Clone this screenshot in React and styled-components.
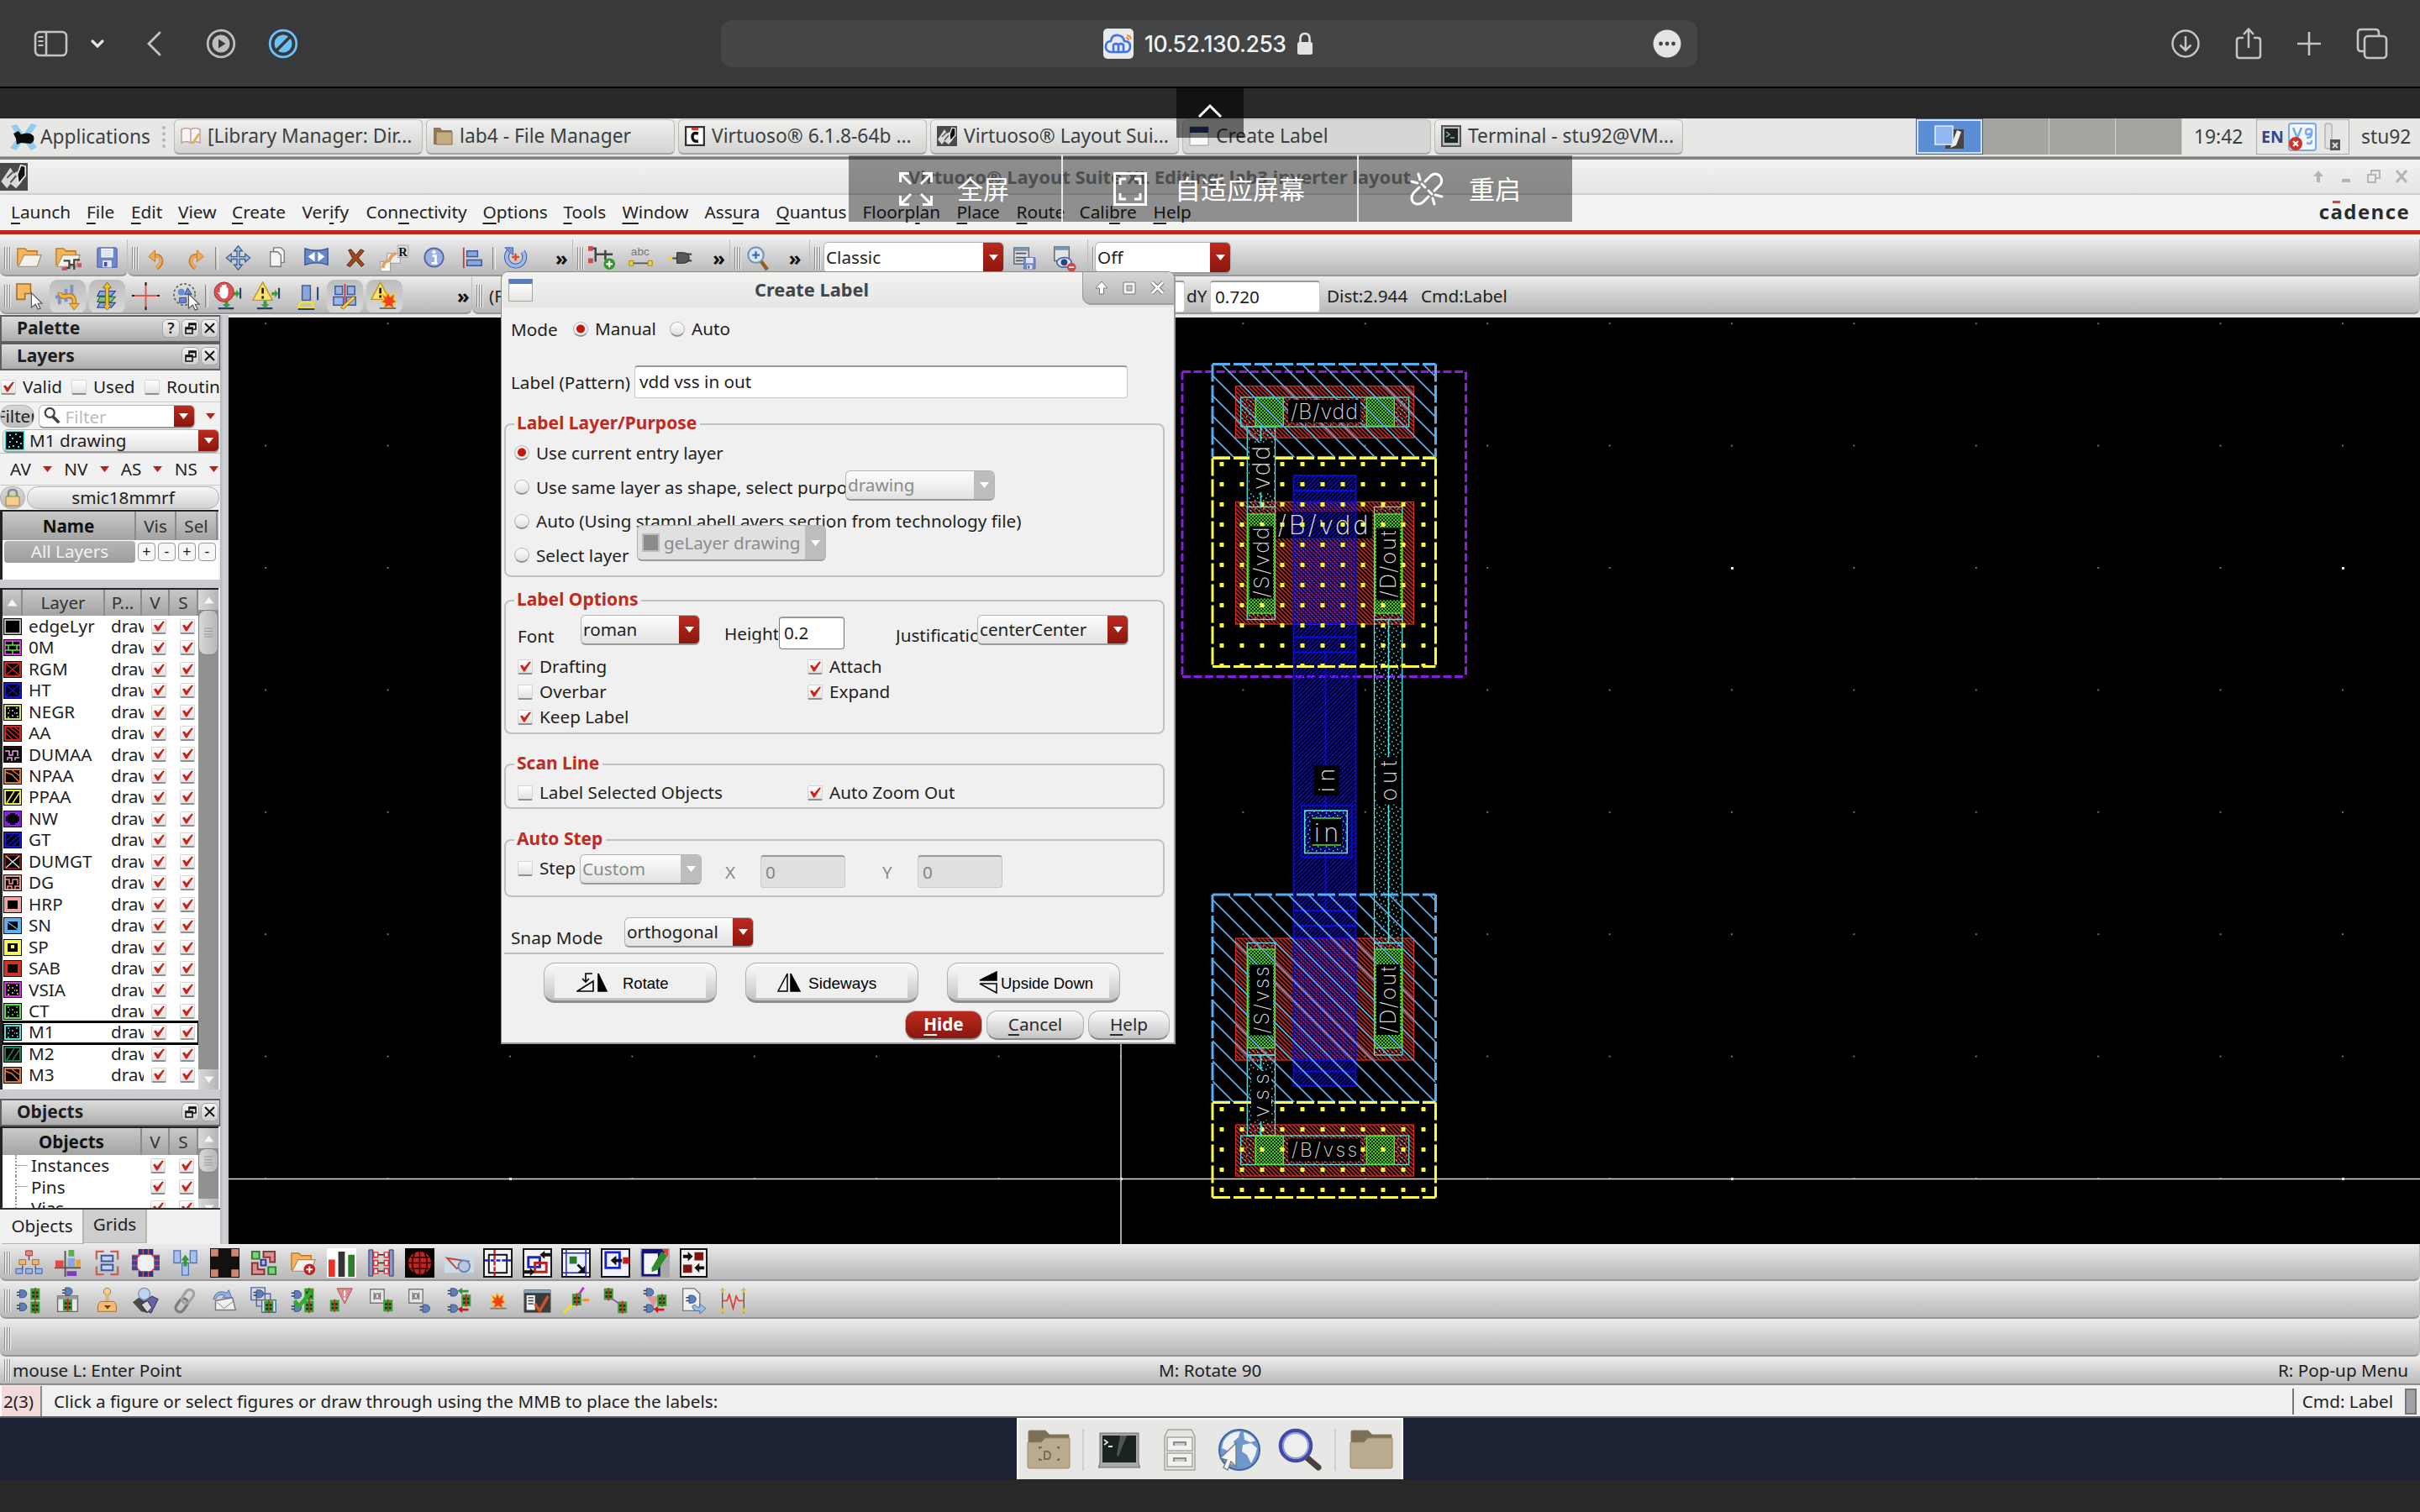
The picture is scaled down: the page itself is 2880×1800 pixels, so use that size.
import React from "react";
import styled, { createGlobalStyle, css } from "styled-components";

const RED = "#b5241a";
const redFill = "linear-gradient(#bd2a1f, #8a160d)";
const barFill = "linear-gradient(#ebebeb 0%, #d2d2d2 45%, #b9b9b9 100%)";

const Global = createGlobalStyle`
  html, body { margin: 0; padding: 0; background: #282828; }
  *, *::before, *::after { box-sizing: border-box; }
  body { font-family: "Noto Sans", "Open Sans", "Noto Sans CJK SC", sans-serif; font-size: 20.7px; line-height: 1.2; color: #1e1e1e; }
  svg { display: block; flex: none; }
`;

const Screen = styled.div`
  position: relative;
  width: 2880px;
  height: 1800px;
  overflow: hidden;
  display: flex;
  flex-direction: column;
  background: #282828;
  white-space: nowrap;
  > * { flex: none; }
`;

/* ---------- tablet browser chrome ---------- */
const BrowserBar = styled.div`
  height: 105px;
  padding: 0 38px 0 40px;
  background: #38393b;
  border-bottom: 2px solid #050505;
  display: grid;
  grid-template-columns: 818px 1162px 1fr;
  align-items: center;
`;
const BrowserSide = styled.div`
  display: flex;
  align-items: center;
  justify-content: ${(p) => (p.$end ? "flex-end" : "flex-start")};
  gap: ${(p) => p.$gap || 0}px;
  height: 100%;
`;
const BrowserSpacer = styled.div`
  width: ${(p) => p.$w}px;
`;
const AddressBar = styled.div`
  height: 56px;
  border-radius: 13px;
  background: #444547;
  display: grid;
  grid-template-columns: 455px 260px 1fr;
  align-items: center;
  color: #f2f2f2;
  font: 500 26.5px Inter, sans-serif;
`;
const AddressHost = styled.div`
  display: flex;
  align-items: center;
  gap: 13px;
  letter-spacing: -0.5px;
`;
const AddressMenu = styled.div`
  display: flex;
  justify-content: flex-end;
  padding-right: 19px;
`;
const BlackStrip = styled.div`
  height: 36px;
  background: #282828;
`;
const PullTab = styled.div`
  position: absolute;
  left: 1400px;
  top: 105px;
  width: 80px;
  height: 59px;
  padding-bottom: 5px;
  background: rgba(0, 0, 0, 0.53);
  display: flex;
  align-items: center;
  justify-content: center;
`;
const RemoteBar = styled.div`
  position: absolute;
  left: 1010px;
  top: 185px;
  width: 861px;
  height: 79px;
  background: rgba(0, 0, 0, 0.41);
  display: grid;
  grid-template-columns: 255px 352px 254px;
  color: #fff;
  font: 400 31px "Noto Sans CJK SC", "Noto Sans", sans-serif;
`;
const RemoteItem = styled.div`
  display: flex;
  align-items: center;
  gap: ${(p) => p.$gap}px;
  padding-left: 60px;
  border-right: ${(p) => (p.$last ? 0 : 2)}px solid #e8e8e8;
`;
const RemoteText = styled.span`
  margin-top: -3px;
`;

/* ---------- desktop panel ---------- */
const Panel = styled.div`
  height: 45px;
  background: #e7e7e5;
  display: flex;
  align-items: center;
  font-size: 22.8px;
  color: #3b3f42;
  padding: 0 0 2px;
`;
const AppsButton = styled.div`
  width: 193px;
  padding-left: 11px;
  display: flex;
  align-items: center;
  gap: 3px;
`;
const PanelGrip = styled.div`
  width: 14px;
  height: 26px;
  border-left: 4px dotted #b5b5b3;
`;
const Task = styled.div`
  width: 296px;
  height: 42px;
  margin-right: 4px;
  padding-left: 7px;
  border: 1px solid #b9b9b6;
  border-bottom: 2px solid #a4a4a2;
  border-radius: 6px;
  background: ${(p) => (p.$active ? "#d6d6d4" : "linear-gradient(#f0f0ef, #d3d3d1)")};
  display: flex;
  align-items: center;
  gap: 8px;
`;
const Pager = styled.div`
  display: flex;
  width: 317px;
  height: 43px;
  margin-left: 273px;
  background: #a4a4a0;
`;
const PagerCell = styled.div`
  flex: 1;
  border-right: 1px solid #d0d0cd;
  background: ${(p) => (p.$on ? "#5b8dd4" : "#a4a4a0")};
  ${(p) => p.$on && css`border: 1px solid #3d5f94; box-shadow: inset 0 0 0 2px #cfe0f7;`}
  display: flex;
  align-items: center;
  justify-content: center;
`;
const Clock = styled.div`
  width: 88px;
  padding-left: 14px;
`;
const Tray = styled.div`
  width: 111px;
  height: 42px;
  border: 1px solid #a9a9a7;
  display: flex;
  align-items: center;
  gap: 5px;
  padding-left: 5px;
  margin-right: 14px;
  font-weight: 700;
  font-size: 19.5px;
  color: #3a3f8e;
`;
const FrameEdge = styled.div`
  height: 4px;
  background: linear-gradient(#b8b8b6, #7b7b7a 40%, #8f8f8e);
`;

/* ---------- application window ---------- */
const TitleBar = styled.div`
  height: 42px;
  background: linear-gradient(#f2f2f1, #e5e5e3);
  border-bottom: 2px solid #cfcfcd;
  display: grid;
  grid-template-columns: 1081px 1fr 132px;
  align-items: center;
  font-weight: 700;
  font-size: 22px;
  color: #83868a;
`;
const WinButtons = styled.div`
  display: flex;
  gap: 11px;
`;
const MenuBar = styled.div`
  height: 42px;
  background: #f3f3f3;
  display: flex;
  align-items: center;
  padding: 0 12px 1px 13px;
  font-size: 20.8px;
  color: #222;
`;
const MenuItem = styled.span`
  width: ${(p) => p.$w}px;
  u { text-underline-offset: 5px; text-decoration-thickness: 2px; }
`;
const Brand = styled.div`
  margin-left: auto;
  padding-bottom: 2px;
  position: relative;
  font: 700 24px "Open Sans", "Noto Sans", sans-serif;
  letter-spacing: 1.4px;
  color: #2b2b2b;
  &::after {
    content: "";
    position: absolute;
    left: 16px;
    top: 4px;
    width: 9px;
    height: 3px;
    background: #d8423c;
  }
`;
const RedLine = styled.div`
  height: 5px;
  background: #bb281c;
`;
const Gutter = styled.div`
  height: 6px;
  background: #f0f0f0;
`;
const Bar = styled.div`
  display: flex;
  height: 45px;
  background: #e9e9e9;
`;
const BarGroup = styled.div`
  ${(p) => (p.$w ? `width: ${p.$w}px;` : "flex: 1;")}
  height: 44px;
  display: flex;
  align-items: center;
  background: ${barFill};
  border-bottom: 2px solid #979797;
  border-right: 1px solid #bdbdbd;
  border-radius: 0 0 7px 7px;
  padding: ${(p) => p.$pt ?? 2}px 0 0 5px;
  overflow: hidden;
`;
const Grip = styled.div`
  flex: none;
  width: 8px;
  height: 27px;
  margin-right: ${(p) => p.$mr ?? -2}px;
  background: repeating-linear-gradient(90deg, #8e8e8e 0 1px, #f2f2f2 1px 2px, transparent 2px 3px);
`;
const Slot = styled.div`
  flex: none;
  width: ${(p) => p.$w || 46.55}px;
  height: 40px;
  display: flex;
  align-items: center;
  justify-content: center;
`;
const Pressed = styled.div`
  width: 43px;
  height: 40px;
  border-radius: 9px;
  background: linear-gradient(#bcbcbc, #d9d9d9);
  display: flex;
  align-items: center;
  justify-content: center;
`;
const Separator = styled.div`
  flex: none;
  width: 4px;
  height: 27px;
  border-left: 1px solid #848484;
  border-right: 1px solid #efefef;
`;
const More = styled.div`
  flex: none;
  width: ${(p) => p.$w}px;
  text-align: center;
  font-weight: 700;
  font-size: 24px;
  color: #111;
`;

/* ---------- form controls ---------- */
const ComboBox = styled.div`
  flex: none;
  width: ${(p) => p.$w}px;
  height: ${(p) => p.$h || 36}px;
  margin-left: ${(p) => p.$ml || 0}px;
  margin-top: ${(p) => (p.$shift || 0) * 2}px;
  display: flex;
  align-items: stretch;
  overflow: hidden;
  border-radius: 6px;
  border: 1px solid #b4b4b4;
  border-bottom: 2px solid #9b9b9b;
  background: ${(p) => p.$bg || "linear-gradient(#fdfdfd, #e2e2e2)"};
  color: ${(p) => (p.$off ? "#8b8b8b" : "#1e1e1e")};
`;
const ComboText = styled.div`
  flex: 1;
  overflow: hidden;
  display: flex;
  align-items: center;
  gap: 5px;
  padding-left: ${(p) => p.$pl ?? 2}px;
`;
const ComboArrow = styled.div`
  width: 24px;
  background: ${(p) => (p.$off ? "#bdbdbd" : redFill)};
  display: flex;
  align-items: center;
  justify-content: center;
`;
const Tri = ({ c = "#fff", w = 11, h = 7 }) => (
  <svg width={w} height={h} viewBox="0 0 10 6" preserveAspectRatio="none">
    <path d="M0 0H10L5 6Z" fill={c} />
  </svg>
);
const Combo = ({ children, off, pl, ...rest }) => (
  <ComboBox $off={off} {...rest}>
    <ComboText $pl={pl}>{children}</ComboText>
    <ComboArrow $off={off}><Tri /></ComboArrow>
  </ComboBox>
);
const Input = styled.div`
  flex: none;
  width: ${(p) => p.$w}px;
  height: ${(p) => p.$h || 39}px;
  margin-left: ${(p) => p.$ml || 0}px;
  margin-top: ${(p) => (p.$shift || 0) * 2}px;
  padding-left: 5px;
  display: flex;
  align-items: center;
  border-radius: 4px;
  background: ${(p) => (p.$off ? "#e0e0e0" : "#fff")};
  color: ${(p) => (p.$off ? "#858585" : "#1e1e1e")};
  border: 1px solid ${(p) => (p.$strong ? "#777" : "#c9c9c9")};
  border-top: 2px solid #999;
`;
const CheckBoxShape = styled.span`
  flex: none;
  width: 18px;
  height: 18px;
  display: flex;
  border-radius: 2px;
  background: linear-gradient(#fff, #e2e2e2);
  border: 1px solid #d4d4d4;
  border-bottom: 2px solid #8f8f8f;
`;
const Check = ({ on }) => (
  <CheckBoxShape>
    {on && (
      <svg width="16" height="15" viewBox="0 0 16 15">
        <path d="M2 6.5L4.5 5.5L7 8.5L13 1.5L15 2L7.5 13.5H6Z" fill="#c4261d" />
      </svg>
    )}
  </CheckBoxShape>
);
const RadioShape = styled.span`
  flex: none;
  width: 18px;
  height: 18px;
  border-radius: 50%;
  border: 1px solid #b5b5b5;
  border-bottom: 2px solid #8f8f8f;
  background: ${(p) => (p.$on ? "radial-gradient(circle, #c5170c 0 4.5px, #f4f4f4 5.5px)" : "linear-gradient(#fff, #dedede)")};
`;
const Option = styled.div`
  flex: none;
  width: ${(p) => (p.$w ? `${p.$w}px` : "auto")};
  margin-top: ${(p) => (p.$shift || 0) * 2}px;
  display: flex;
  align-items: center;
  gap: 8px;
  overflow: hidden;
`;

/* ---------- dock on the left ---------- */
const Workspace = styled.div`
  height: 1106px;
  display: flex;
  background: #cfcfd3;
`;
const Dock = styled.div`
  width: 262px;
  background: #f1f1f1;
  display: flex;
  flex-direction: column;
  overflow: hidden;
  > * { flex: none; }
`;
const DockSplit = styled.div`
  width: 10px;
  background: linear-gradient(90deg, #b4b4b8, #d2d2d6 40%, #c6c6ca);
`;
const DockHeader = styled.div`
  height: 33px;
  padding: 0 2px 2px 18px;
  display: flex;
  align-items: center;
  gap: 4px;
  font-weight: 700;
  font-size: 21px;
  background: linear-gradient(#dcdcdc, #adadad);
  border: 2px solid #5f5f5f;
  border-right-width: 1px;
  > span { margin-right: auto; }
`;
const HeaderButton = styled.div`
  width: 19px;
  height: 20px;
  border-radius: 5px;
  background: linear-gradient(#f2f2f2, #cfcfcf);
  box-shadow: 0 0 0 1px #a5a5a5;
  display: flex;
  align-items: center;
  justify-content: center;
  font-size: 18px;
  font-weight: 600;
`;
const CheckRow = styled.div`
  height: 38px;
  display: grid;
  grid-template-columns: 84px 87px 1fr;
  align-items: center;
  border-bottom: 1px solid #cdcdcd;
  padding: 2px 0 0 1px;
`;
const FilterRow = styled.div`
  height: 31px;
  display: flex;
  align-items: center;
  gap: 5px;
  padding-top: 2px;
`;
const Pill = styled.div`
  width: ${(p) => p.$w}px;
  height: 27px;
  border-radius: 13px;
  border: 1px solid #b0b0b0;
  background: ${(p) => (p.$dark ? "linear-gradient(#d8d8d8, #bdbdbd)" : "linear-gradient(#f7f7f7, #d2d2d2)")};
  display: flex;
  align-items: center;
  justify-content: center;
  overflow: hidden;
`;
const FilterText = styled.span`
  margin-top: 3px;
  color: #bcbcbc;
`;
const FilterMenu = styled.div`
  width: 27px;
  padding-left: 8px;
`;
const ComboRow = styled.div`
  height: 30px;
  padding: 1px 0 0 3px;
  border-bottom: 1px solid #c4c4c4;
`;
const VisRow = styled.div`
  height: 38px;
  padding: 0 2px 0 12px;
  display: flex;
  align-items: center;
  justify-content: space-between;
  border-bottom: 1px solid #c9c9c9;
`;
const LibRow = styled.div`
  height: 29px;
  display: flex;
  align-items: center;
  gap: 2px;
`;
const NameTable = styled.div`
  height: 83px;
  margin-right: 2px;
  border-top: 2px solid #222;
  border-left: 3px solid #222;
  background: #fff;
`;
const HeadRow = styled.div`
  height: ${(p) => p.$h}px;
  display: grid;
  grid-template-columns: ${(p) => p.$cols};
  background: linear-gradient(#c9c9c9, #a3a3a3);
  color: #333;
  text-align: center;
`;
const HeadCell = styled.div`
  display: flex;
  align-items: center;
  justify-content: center;
  border-right: 2px solid #8b8b8b;
  ${(p) => p.$b && "font-weight: 700; color: #111;"}
`;
const NameRow = styled.div`
  height: 27px;
  display: flex;
  align-items: center;
  gap: 3px;
  padding-left: 2px;
`;
const AllLayers = styled.div`
  width: 156px;
  height: 26px;
  border-radius: 4px;
  background: linear-gradient(#b5b5b5, #9d9d9d);
  color: #f2f2f2;
  text-align: center;
`;
const Mini = styled.div`
  width: 21px;
  height: 22px;
  border: 1px solid #999;
  border-radius: 4px;
  background: #f5f5f5;
  display: flex;
  align-items: center;
  justify-content: center;
  font-size: 18px;
`;
const SplitH = styled.div`
  height: ${(p) => p.$h}px;
  background: #cbcbd0;
`;
const ListBox = styled.div`
  height: ${(p) => p.$h}px;
  margin-right: 2px;
  border-top: 2px solid #222;
  border-left: 3px solid #222;
  display: grid;
  grid-template-columns: 233px 24px;
  background: #fff;
  overflow: hidden;
`;
const LayerRow = styled.div`
  height: 25.46px;
  display: grid;
  grid-template-columns: 30px 98px 39px 9px 34px 1fr;
  align-items: center;
  padding-left: 1px;
  ${(p) => p.$on && css`
    outline: 3px solid #000;
    outline-offset: -1px;
  `}
`;
const LayerText = styled.div`
  overflow: hidden;
  margin-top: -1px;
`;
const TreeRow = styled.div`
  height: 25.3px;
  display: grid;
  grid-template-columns: 34px 142px 34px 1fr;
  align-items: center;
`;
const TreeLine = styled.div`
  width: 15px;
  height: 100%;
  margin-left: 15px;
  border-left: 2px dotted #999;
  background: linear-gradient(#aaa, #aaa) 0 50% / 100% 1px no-repeat;
`;
const Scroll = styled.div`
  display: flex;
  flex-direction: column;
  background: #919191;
`;
const ScrollButton = styled.div`
  height: 24px;
  background: linear-gradient(90deg, #d9d9d9, #b5b5b5);
  display: flex;
  align-items: center;
  justify-content: center;
  ${(p) => p.$end && "margin-top: auto;"}
`;
const Thumb = styled.div`
  height: ${(p) => p.$h}px;
  border-radius: 9px;
  border: 1px solid #808080;
  background: linear-gradient(90deg, #d8d8d8, #b6b6b6);
  display: flex;
  align-items: center;
  justify-content: center;
`;
const Tabs = styled.div`
  height: 43px;
  border-top: 2px solid #333;
  display: flex;
  padding-left: 2px;
`;
const Tab = styled.div`
  width: ${(p) => p.$w}px;
  height: ${(p) => (p.$on ? 41 : 40)}px;
  background: ${(p) => (p.$on ? "#f1f1f1" : "#cecece")};
  border-right: 2px solid #b5b5b5;
  border-bottom: 1px solid #b5b5b5;
  display: flex;
  align-items: center;
  justify-content: center;
  padding-bottom: ${(p) => (p.$on ? 2 : 4)}px;
`;
const CanvasFrame = styled.div`
  width: 2608px;
  padding-top: 3px;
  background: #e9e9e9;
`;

/* ---------- bottom of the window ---------- */
const MouseBar = styled.div`
  height: 33px;
  padding: 0 14px 1px 5px;
  display: grid;
  grid-template-columns: 10px 1364px 1fr auto;
  align-items: center;
  background: linear-gradient(#ececec, #b9b9b9);
  border-bottom: 2px solid #8d8d8d;
`;
const StatusBar = styled.div`
  height: 39px;
  padding-top: 1px;
  background: #f0f0f0;
  border-bottom: 2px solid #5c5c5c;
  display: flex;
  align-items: center;
`;
const StatusCount = styled.div`
  width: 50px;
  height: 36px;
  margin-right: 14px;
  padding-left: 2px;
  display: flex;
  align-items: center;
  background: #f2dada;
  border-left: 2px solid #fff;
  border-right: 2px solid #8a8a8a;
`;
const StatusCmd = styled.div`
  margin-left: auto;
  height: 31px;
  padding: 0 4px 0 10px;
  border-left: 2px solid #777;
  display: flex;
  align-items: center;
  gap: 14px;
`;
const StatusGrip = styled.div`
  width: 14px;
  height: 31px;
  border: 2px solid #777;
  background: #a2a2a8;
`;
const Desktop = styled.div`
  height: 73px;
  background: #1a2233;
  display: flex;
  padding-left: 1210px;
`;
const Launcher = styled.div`
  width: 460px;
  background: #e7e7e5;
  border: 2px solid #fafafa;
  border-bottom: 0;
  display: grid;
  grid-template-columns: 72px 10px 75px 69px 74px 70px 14px 72px;
  align-items: center;
`;
const LaunchCell = styled.div`
  display: flex;
  align-items: center;
  justify-content: center;
`;
const LaunchRule = styled.div`
  width: 2px;
  height: 50px;
  justify-self: center;
  background: #cfcfcd;
`;

/* ---------- Create Label dialog ---------- */
const Dialog = styled.div`
  position: absolute;
  left: 596px;
  top: 323px;
  width: 803px;
  height: 920px;
  padding-left: 1px;
  background: #f0f0f0;
  border: 1px solid #8a8a8a;
  border-right: 2px solid #9c9c9c;
  border-bottom: 2px solid #9c9c9c;
  border-radius: 9px 9px 0 0;
  overflow: hidden;
`;
const DialogTitle = styled.div`
  height: 42px;
  background: linear-gradient(#f2f2f1, #e6e6e4);
  display: grid;
  grid-template-columns: 46px 644px 1fr;
  align-items: center;
  text-align: center;
  font-weight: 700;
  font-size: 21.8px;
  color: #3f474c;
`;
const DialogMark = styled.div`
  width: 29px;
  height: 27px;
  margin-left: 7px;
  border: 1px solid #a6a6a6;
  border-top: 6px solid #5a7db5;
  background: linear-gradient(#fff, #e4e5df);
`;
const DialogButtons = styled.div`
  height: 39px;
  padding-left: 3px;
  align-self: start;
  border-radius: 0 0 0 10px;
  border-left: 1px solid #999;
  border-bottom: 2px solid #a0a0a0;
  background: linear-gradient(#d6d6d6, #b4b4b4);
  display: flex;
  align-items: center;
  justify-content: center;
  gap: 17px;
`;
const FormRow = styled.div`
  height: ${(p) => p.$h}px;
  padding-left: ${(p) => p.$pl || 0}px;
  padding-top: ${(p) => p.$pt || 0}px;
  display: flex;
  align-items: center;
`;
const Label = styled.div`
  flex: none;
  width: ${(p) => p.$w}px;
  margin-left: ${(p) => p.$ml || 0}px;
  margin-top: ${(p) => (p.$shift || 0) * 2}px;
  overflow: hidden;
  color: ${(p) => (p.$off ? "#8b8b8b" : "inherit")};
`;
const Group = styled.fieldset`
  width: 786px;
  height: ${(p) => p.$h}px;
  min-width: 0;
  margin: ${(p) => p.$mt || 0}px 0 0 2px;
  padding: 0 0 0 10px;
  border: 2px solid #c2c2c2;
  border-radius: 8px;
`;
const Legend = styled.legend`
  height: 26px;
  padding: 0 4px 2px 3px;
  display: flex;
  align-items: center;
  font-weight: 700;
  font-size: 21px;
  color: #c02a22;
`;
const SnapRow = styled(FormRow)`
  border-bottom: 2px solid #bdbdbd;
  margin: 0 12px 0 2px;
`;
const ToolRow = styled.div`
  height: 64px;
  padding: 3px 0 0 49px;
  display: flex;
  align-items: center;
  gap: 34px;
`;
const ToolButton = styled.div`
  width: 206px;
  height: 48px;
  border-radius: 13px;
  background: linear-gradient(#fdfdfd, #c2c2c2);
  border: 1px solid #b0b0b0;
  border-bottom: 3px solid #8f8f8f;
  padding: 4px 12px 3px;
`;
const ToolFace = styled.div`
  height: 100%;
  background: #f0f0f0;
  display: flex;
  align-items: center;
  padding-left: ${(p) => p.$pl}px;
  gap: ${(p) => p.$gap}px;
  font: ${(p) => p.$fs || 18.5}px "Liberation Sans", sans-serif;
  color: #000;
`;
const ToolText = styled.span`
  padding-top: 4px;
`;
const ActionRow = styled.div`
  height: 40px;
  padding-right: 5px;
  display: flex;
  align-items: center;
  justify-content: flex-end;
  gap: 5px;
`;
const Action = styled.div`
  width: ${(p) => p.$w}px;
  height: 35px;
  border-radius: 13px;
  border: 1px solid #b0b0b0;
  border-bottom: 2px solid #888;
  background: ${(p) => (p.$main ? redFill : "linear-gradient(#fcfcfc, #c5c5c5)")};
  color: ${(p) => (p.$main ? "#fff" : "#2a2a2a")};
  font-weight: ${(p) => (p.$main ? 700 : 400)};
  display: flex;
  align-items: center;
  justify-content: center;
  u { text-underline-offset: 4px; text-decoration-thickness: 2px; }
`;

/* ---------- icons (36 × 36 grid) ---------- */
const Icon = ({ s = 35, children }) => (
  <svg width={s} height={s} viewBox="0 0 36 36" fill="none">{children}</svg>
);
const Chip = ({ x, y }) => (
  <g>
    <path d={`M${x} ${y}h12v15h-12z`} fill="#3d9b35" />
    <path d={`M${x + 2} ${y + 4}h3v3h-3zM${x + 7} ${y + 4}h3v3h-3zM${x + 2} ${y + 9}h3v3h-3zM${x + 7} ${y + 9}h3v3h-3z`} fill="#123c10" />
    <path d={`M${x + 6} ${y - 1}v17`} stroke="#d02020" strokeWidth="1.6" />
  </g>
);
const Plug = ({ x, y }) => (
  <g>
    <path d={`M${x} ${y + 3}h4M${x} ${y + 7}h4`} stroke="#333c55" strokeWidth="1.6" />
    <path d={`M${x + 4} ${y}h4a5 5 0 0 1 0 10h-4z`} fill="#5f7fb8" stroke="#334d80" />
  </g>
);
const Arrow = ({ d, c = "#2f9a2f" }) => <path d={d} fill={c} />;
const Flash = ({ x, y }) => (
  <path transform={`translate(${x} ${y})`} d="M0 2L6 6L8 0L11 6L17 1L15 9L19 12L14 14L16 20L9 17L3 20L5 14L0 12L4 9Z" fill="#f0401c" stroke="#ffc21a" strokeWidth="1.2" />
);
const Pointer = ({ x, y }) => (
  <path transform={`translate(${x} ${y})`} d="M0 0L13 13L8 13L11 19L8 20L5 14L0 18Z" fill="#fff" stroke="#555" strokeWidth="1.2" />
);
const Disk = ({ x = 6, y = 5, s = 24 }) => (
  <g transform={`translate(${x} ${y}) scale(${s / 26})`}>
    <path d="M0 2Q0 0 2 0H24Q26 0 26 2V26H0Z" fill="#6f87cd" stroke="#40549a" />
    <path d="M5 1h16v12H5z" fill="#f4f6fb" />
    <path d="M7 4h12M7 7h12M7 10h12" stroke="#b6c2e4" />
    <path d="M7 17h12v9H7z" fill="#dfe4f2" /><path d="M9 19h4v6H9z" fill="#40549a" />
  </g>
);
const FolderOpen = () => (
  <g>
    <path d="M4 27V6h9l3 3h12v6" fill="#f2b45c" stroke="#b8741f" strokeWidth="1.3" />
    <path d="M5 28L12 14H33L28 28Z" fill="#f3f1ee" stroke="#a98b60" strokeWidth="1.2" />
  </g>
);
const NetMark = () => (
  <g>
    <path d="M3 6h7v16M10 13h12M22 8v12M22 13h9" stroke="#444" strokeWidth="2.6" />
    <path d="M1 3h6v6H1zM1 18h6v6H1z" fill="#cf4b52" />
  </g>
);
const Doc = ({ x, y }) => <path d={`M${x} ${y}h9l4 4v14h-13z`} fill="#f4f4f4" stroke="#7a7a7a" strokeWidth="1.4" />;
const BackArrow = () => (
  <g>
    <path d="M18 30C27 24 25 13 14 15" stroke="#c77a26" strokeWidth="5" />
    <path d="M18 29.500C26 23 24 14 14 15.500" stroke="#efab5c" strokeWidth="3" />
    <path d="M8 16L16 8V22Z" fill="#efab5c" stroke="#c77a26" />
  </g>
);
const Dimension = () => (
  <g>
    <path d="M33 8v13M6 33h19" stroke="#26406e" strokeWidth="2.200" />
    <path d="M14 24v4h-3l5 5 5-5h-3v-4M24 13h4v-3l4 5-4 5v-3h-4" fill="#3e9b3a" />
  </g>
);

const icons = {
  open: <FolderOpen />,
  openNet: <g><FolderOpen /><path d="M13 21h7v9h-5M20 26h6v-6h7M26 26v6" stroke="#444" strokeWidth="2.4" /><path d="M11 29h6v4h-6zM30 24h5v5h-5z" fill="#d05058" /></g>,
  save: <Disk />,
  undo: <BackArrow />,
  redo: <g transform="matrix(-1 0 0 1 36 0)"><BackArrow /></g>,
  move: <path d="M18 3l5 6h-3.500v7h7v-3.500l6 5-6 5V19h-7v7H23l-5 6-5-6h3.500v-7h-7v3.500l-6-5 6-5V16h7V9H13z" fill="#a8c3e6" stroke="#3f618f" strokeWidth="1.4" />,
  copy: <g><Doc x={14} y={5} /><Doc x={10} y={10} /></g>,
  stretch: <g><path d="M4 6q14 5 28 0v20q-14-5-28 0z" fill="#6888c8" stroke="#37538f" strokeWidth="1.4" /><path d="M16 10v12l-8-6zM20 10v12l8-6z" fill="#fff" /></g>,
  del: <path d="M9 8l3-1 6 7 6-7 4 2-7 8.500 7 8-3 3-7-8-7 8-4-2 7-8.500z" fill="#9c4a1c" stroke="#5c2408" />,
  replaceR: <g><path d="M9 12h16v12H9z" fill="#eee" stroke="#999" /><path d="M1 22h12v12H1z" fill="#f7f7f7" stroke="#999" /><path d="M4 30q0-8 7-9M12 21q1-7 8-9" stroke="#e0a35c" strokeWidth="4" /><path d="M22 2h13v15H22z" fill="#d8d8d8" stroke="#aaa" /><text x="23" y="15" fontSize="15" fontWeight="700" fontFamily="Liberation Serif" fill="#111">R</text></g>,
  info: <g><circle cx="18" cy="17" r="11.500" fill="#9cb0e0" stroke="#4d65a8" strokeWidth="1.8" /><path d="M16 15h4v9M15 24h7" stroke="#fff" strokeWidth="2.800" /><circle cx="18" cy="10.500" r="2.200" fill="#fff" /></g>,
  align: <g><path d="M7 5v25" stroke="#c03a3a" strokeWidth="1.8" /><path d="M11 9h13v7H11zM11 20h18v7H11z" fill="#8aa6dc" stroke="#3b589b" strokeWidth="1.5" /></g>,
  rotate: <g><path d="M10 9a11 11 0 1 0 17 1" stroke="#405da6" strokeWidth="6" /><path d="M10 9a11 11 0 1 0 17 1" stroke="#a3b8e8" strokeWidth="4" /><path d="M5 5h10v9z" fill="#7c97d5" stroke="#405da6" /><path d="M18 12v9M13.500 16.500h9" stroke="#e04a2c" strokeWidth="2.600" /></g>,
  netAdd: <g><NetMark /><circle cx="27" cy="25" r="7" fill="#33962f" /><path d="M27 21v8M23 25h8" stroke="#fff" strokeWidth="2.200" /></g>,
  abc: <g><text x="6" y="14" fontSize="14" fontFamily="Liberation Sans" fill="#777">abc</text><path d="M6 24h24" stroke="#555" strokeWidth="1.800" /><path d="M4 21h5v6H4zM27 21h5v6h-5z" fill="#f2d434" stroke="#a58a12" /></g>,
  plug: <g><path d="M5 18h9M24 13h8M24 21h8" stroke="#444" strokeWidth="2.200" /><path d="M14 11h7q8 0 8 6.500T21 24h-7z" fill="#585858" stroke="#222" /><circle cx="6" cy="18" r="2.600" fill="#f2d434" /></g>,
  zoom: <g><path d="M22 21l8 11" stroke="#9c5d20" strokeWidth="4.500" /><circle cx="16" cy="14" r="9.500" fill="#d5e6f7" stroke="#7d94b0" strokeWidth="2.200" /><path d="M16 9.500v9M11.500 14h9" stroke="#3e68ad" strokeWidth="2.400" /></g>,
  viewSave: <g><path d="M6 5h18v20H6z" fill="#dde0e3" stroke="#5d666e" strokeWidth="1.500" /><path d="M6 5h18v4H6z" fill="#7f95a8" /><path d="M8 12h13M8 17h13M8 21h9" stroke="#555" strokeWidth="1.800" /><Disk x={18} y={17} s={14} /></g>,
  viewHide: <g><path d="M8 4h18v17H8z" fill="#e2e4e6" stroke="#5d666e" strokeWidth="1.500" /><path d="M8 4h18v4H8z" fill="#7f95a8" /><ellipse cx="20" cy="23" rx="9" ry="6" fill="#dbe6f7" stroke="#4a6ba6" strokeWidth="1.800" /><circle cx="20" cy="23" r="4" fill="#27457c" /><circle cx="29" cy="29" r="5.500" fill="#cf4a48" /><path d="M26 29h6" stroke="#fff" strokeWidth="1.800" /></g>,
  selShape: <g><path d="M3 3h17v12h-7v7H3z" fill="#f3b765" stroke="#a96c1d" strokeWidth="1.600" /><Pointer x={21} y={14} /></g>,
  wire: <g><path d="M3 19h22M8 13v15M16 9v16M23 4v18" stroke="#7f95c4" strokeWidth="4" /><path d="M8 14q2 6 9 4t9 4v6" stroke="#a96c1d" strokeWidth="5.500" /><path d="M8 14q2 6 9 4t9 4v6" stroke="#f3b540" strokeWidth="3.500" /><path d="M20 27h12l-6 8z" fill="#f3b540" stroke="#a96c1d" /></g>,
  layers: <g><path d="M9 12h19l-5 6H6zM9 26h19l-5 6H6z" fill="#8fa6e0" stroke="#32498e" strokeWidth="1.300" /><path d="M9 19h19l-5 6H6z" fill="#7ec27a" stroke="#2c7a2c" strokeWidth="1.300" /><path d="M18 1l5 7h-3v21h3l-5 6-5-6h3V8h-3z" fill="#f3bf2c" stroke="#8d6a0d" /></g>,
  cross: <g><path d="M18 2v32M2 17.500h32" stroke="#dd5a4e" strokeWidth="2" /><path d="M18 1v4M18 31v4M1 17.500h3M32 17.500h3" stroke="#222" strokeWidth="2.200" /></g>,
  selGroup: <g><circle cx="17" cy="16" r="13" stroke="#666" strokeWidth="1.800" strokeDasharray="3 2.500" /><circle cx="13" cy="13" r="4" fill="#6b8bd0" /><path d="M11 20h8v6h-8zM21 8l5 8h-9z" fill="#6b8bd0" stroke="#32498e" /><Pointer x={22} y={15} /></g>,
  stop: <g><Dimension /><circle cx="13" cy="13" r="12" fill="#d85252" stroke="#a03030" /><path d="M8 14V8q1-2 2 0V5q2-2 3 0V4q2-1 3 1v3q2-1 2 1v7q-1 5-5 5t-5-4l-3-4z" fill="#fff" /></g>,
  warn: <g><Dimension /><path d="M13 1L25 23H1Z" fill="#fbe273" stroke="#c09a1a" strokeWidth="1.500" /><path d="M13 8v7M13 18v3" stroke="#111" strokeWidth="2.600" /></g>,
  ruler: <g><path d="M13 5h10v18H13z" fill="#8aa6dc" stroke="#3b589b" strokeWidth="1.500" /><path d="M11 26h14l2 6H9z" stroke="#f2e41c" strokeWidth="2.500" /><path d="M32 7v16M8 34h20" stroke="#26406e" strokeWidth="2" /></g>,
  edit: <g><path d="M6 6h9v10H6zM21 6h9v10h-9zM4 19h12v10H4zM20 19h11v10H20z" fill="#9db4e2" stroke="#3b589b" strokeWidth="1.500" /><path d="M18 3v29" stroke="#c03a3a" strokeWidth="1.800" /><path d="M13 32L28 18l2.500 2.500L16 34z" fill="#f6d040" stroke="#856a10" /></g>,
  warnFlash: <g><path d="M13 1L24 22H2Z" fill="#fbe273" stroke="#c09a1a" strokeWidth="1.500" /><path d="M13 8v7M13 17v3" stroke="#111" strokeWidth="2.600" /><Flash x={14} y={13} /><path d="M12 33h20" stroke="#555" strokeWidth="1.500" /></g>,
};

const padBlocks = [];
for (let k = 0; k < 3; k++) {
  padBlocks.push([9 + k * 6.500, 1, 5, 7], [9 + k * 6.500, 28, 5, 7], [1, 9 + k * 6.500, 7, 5], [28, 9 + k * 6.500, 7, 5]);
}
const rowA = [
  <g><path d="M18 9v6M10 21v5M26 21v5" stroke="#555" strokeWidth="1.500" /><path d="M14 3h8v6h-8z" fill="#e58a88" stroke="#a03a38" /><path d="M6 14h8v6H6zM22 14h8v6h-8z" fill="#f2b878" stroke="#a86a28" /><path d="M2 25h8v6H2zM14 25h8v6h-8zM26 25h8v6h-8z" fill="#9fb8ea" stroke="#3b589b" /></g>,
  <g><path d="M2 24h32M15 3v32" stroke="#555" strokeWidth="2" /><path d="M19 2h7v8h-7z" fill="#56b050" /><path d="M18 12h9v11h-9z" fill="#8aa6dc" /><path d="M3 15h10v9H3z" fill="#dd4a48" /><path d="M28 14h6v9h-6z" fill="#eea23c" /><path d="M17 28h12v6H17z" fill="#7a3fc0" /></g>,
  <g><path d="M5 14V4h9M22 4h9v10M31 22v10h-9M14 32H5V22" stroke="#c86060" strokeWidth="2.500" /><path d="M11 9h14v7H11zM11 20h14v7H11z" fill="#c5d3f2" stroke="#3b589b" strokeWidth="2" /></g>,
  <g><path d="M9 1h18v7h8v19h-8v8H9v-8H1V8h8z" fill="#e04a40" />{padBlocks.map(([x, y, w, h], k) => <rect key={k} x={x} y={y} width={w} height={h} fill={k % 4 < 2 ? "#27378f" : "#3448a8"} />)}<path d="M12 8h12l4 4v12l-4 4H12l-4-4V12z" fill="#f0f0f0" /></g>,
  <g><path d="M4 3h8v15H4zM24 3h8v15h-8zM14 18h8v15h-8z" fill="#a9c0ef" stroke="#5470b4" strokeWidth="1.300" /><Arrow d="M18 8l5 7h-3v7h-4v-7h-3z" /></g>,
  <g><path d="M0 0h36v36H0z" fill="#151010" /><path d="M1 1h9v9H1zM26 1h9v9h-9zM1 26h9v9H1zM26 26h9v9h-9z" fill="#d3836e" /></g>,
  <g><path d="M4 4h9v9H4zM24 23h9v9h-9z" fill="#7fd07a" stroke="#2c7a2c" strokeWidth="2" /><path d="M18 4h14v13h-6v-6h-8zM4 18h7v8h8v6H4z" fill="#d79090" stroke="#8c3030" strokeWidth="2" /><path d="M15 14h6v7h-6z" fill="#a9b4ef" stroke="#2b3790" strokeWidth="2" /></g>,
  <g><FolderOpen /><circle cx="26" cy="26" r="7" fill="#c02020" /><path d="M26 22v8M22 26h8" stroke="#fff" strokeWidth="2" /></g>,
  <g><path d="M0 0h36v36H0z" fill="#fff" /><path d="M2 14h8v21H2z" fill="#ea3226" /><path d="M14 4h8v31h-8z" fill="#333" /><path d="M26 8h8v27h-8z" fill="#2f7d2a" /></g>,
  <g><path d="M3 2h5v32H3zM28 2h5v32h-5z" fill="#8a97c8" stroke="#26306c" /><path d="M8 8h20M8 18h20M8 28h20" stroke="#333" strokeWidth="1.500" /><path d="M9 5h5v6H9zM22 5h5v6h-5zM9 15h5v6H9zM22 15h5v6h-5zM9 25h5v6H9zM22 25h5v6h-5z" fill="#fff" stroke="#e02a2a" strokeWidth="1.500" /></g>,
  <g><path d="M0 0h36v36H0z" fill="#070303" /><circle cx="18" cy="18" r="14" fill="#c2251f" /><path d="M18 4v28M4 18h28M7 11h22M7 25h22M12 5q-6 13 0 26M24 5q6 13 0 26" stroke="#200" strokeWidth="1.500" /></g>,
  <g><path d="M0 7h36v23H0z" fill="#c9dde8" /><path d="M3 12l26 4-14 9z" stroke="#d83c34" strokeWidth="2" /><circle cx="24" cy="22" r="7" fill="#b7c7e0" stroke="#6a86b8" strokeWidth="2" /></g>,
  <g><path d="M1 1h34v34H1z" fill="#f4f4f4" stroke="#111" strokeWidth="2" /><path d="M7 8h22v22H7z" stroke="#111" strokeWidth="2" /><path d="M2 15h32" stroke="#1a20d8" strokeWidth="2.500" strokeDasharray="5 2" /><path d="M14 2v32" stroke="#d81a1a" strokeWidth="2.500" strokeDasharray="5 2" /></g>,
  <g><path d="M1 1h34v34H1z" fill="#f4f4f4" stroke="#111" strokeWidth="2" /><path d="M7 11h14v12H7z" stroke="#1a20d8" strokeWidth="3" /><path d="M15 18h14v11H15z" stroke="#c02020" strokeWidth="3" /><Arrow c="#111" d="M21 8l6-5v3h7v4h-7v3zM15 29l-6 5v-3H2v-4h7v-3z" /></g>,
  <g><path d="M1 1h34v34H1z" fill="#eef0ff" stroke="#111" strokeWidth="2" /><path d="M1 6h34M1 30h34M6 1v34M30 1v34" stroke="#1a20d8" strokeWidth="1.500" /><path d="M10 10h9v9h-9z" fill="#2f7d2a" /><path d="M20 20l8 8" stroke="#111" strokeWidth="3" /><Arrow c="#111" d="M29 21v9h-9z" /></g>,
  <g><path d="M1 1h34v34H1z" fill="#f0f2ff" stroke="#111" strokeWidth="2" /><path d="M6 5h17v19H6z" stroke="#1a20d8" strokeWidth="3" /><path d="M27 11h8v8h-8z" fill="#c02020" /><Arrow c="#111" d="M12 15l7-6v4h7v4h-7v4z" /></g>,
  <g><path d="M0 0h36v36H0z" fill="#a9a9a9" /><path d="M3 5h20v28H3z" fill="#f4f4f4" stroke="#10107c" strokeWidth="3" /><path d="M2 1h28v5H2z" fill="#10107c" /><path d="M14 24L26 4l7 5-11 17-8 3z" fill="#2f8a2a" /><path d="M26 1h8v9z" fill="#e04040" /></g>,
  <g><path d="M2 1h32v34H2z" fill="#f4f4f4" stroke="#111" strokeWidth="2" /><path d="M19 5h11v10H19zM5 20h11v10H5z" fill="#801414" /><Arrow c="#111" d="M17 10l-6 6v-4H5V8h6V4zM19 24l6-6v4h6v4h-6v4z" /></g>,
];
const rowB = [
  <g><Plug x={2} y={4} /><Plug x={2} y={21} /><Chip x={20} y={2} /><Chip x={20} y={19} /></g>,
  <g><path d="M5 12h26v20H5z" fill="#e8e8e8" stroke="#666" strokeWidth="1.500" /><path d="M5 12h26v4H5z" fill="#9a9a9a" /><Plug x={11} y={1} /><Chip x={12} y={16} /></g>,
  <g><circle cx="18" cy="6" r="4.500" fill="#f4cf9d" stroke="#a96c1d" /><path d="M16 10h4l1 9h-6z" fill="#e9b46b" /><path d="M9 19h18l3 5v8H6v-8z" fill="#f2bd72" stroke="#a96c1d" /><path d="M14 24h9l-4.500 5z" fill="#6b3f10" /></g>,
  <g><path d="M1 20l8-6 8 5 4 15-9-2z" fill="#4a4a4a" /><path d="M14 20l12-8 8 4-9 18-11-5z" fill="#6a62a4" stroke="#28244c" /><path d="M12 23l8-5 6 9-6 6z" fill="#d8d8dc" stroke="#222" /><circle cx="16" cy="9" r="7.500" fill="#bdd5ef" stroke="#7d94b0" strokeWidth="1.500" /></g>,
  <g transform="rotate(-55 18 18)"><rect x="1" y="12" width="19" height="11" rx="5.500" stroke="#7c7c7c" strokeWidth="3.500" /><rect x="15" y="12" width="19" height="11" rx="5.500" stroke="#a3a3a3" strokeWidth="3.500" /></g>,
  <g><path d="M6 18l22-4 4 16H6z" fill="#f1f1f1" stroke="#777" strokeWidth="1.500" /><path d="M8 20l9 8 13-10" stroke="#777" /><path d="M3 16q4-14 18-8l2-4 4 10H15l3-3q-8-3-12 5z" fill="#94b4e4" stroke="#4a6aa4" /></g>,
  <g><path d="M2 1h18v16H2zM9 9h18v16H9z" stroke="#4765ab" strokeWidth="1.500" /><path d="M16 17h18v16H16z" fill="#e4e9f7" stroke="#4765ab" strokeWidth="1.500" /><Plug x={5} y={4} /><Chip x={19} y={18} /></g>,
  <g><Plug x={3} y={5} /><Plug x={3} y={22} /><Chip x={20} y={2} /><Chip x={20} y={18} /><path d="M7 18l6 7L29 6" stroke="#2fae2b" strokeWidth="5" /></g>,
  <g><path d="M12 2h20L22 22z" fill="#e08c8c" stroke="#b04848" /><path d="M22 5v7M22 14v3" stroke="#fff" strokeWidth="2.500" /><Chip x={3} y={17} /></g>,
  <g><path d="M4 3h18v18H4z" fill="#e8e8e8" stroke="#777" strokeWidth="1.500" /><path d="M9 7v10M17 7v10M9 12h2M15 12h2M11 9h4v6h-4z" stroke="#777" strokeWidth="1.500" /><Chip x={21} y={17} /></g>,
  <g><path d="M4 3h18v18H4z" fill="#e8e8e8" stroke="#777" strokeWidth="1.500" /><path d="M9 7v10M17 7v10M9 12h2M15 12h2M11 9h4v6h-4z" stroke="#777" strokeWidth="1.500" /><Plug x={18} y={23} /></g>,
  <g><Plug x={3} y={2} /><Plug x={3} y={23} /><Chip x={21} y={10} /><Arrow d="M16 5l6-4v3h8v3h-8v3z" /><Arrow c="#c02020" d="M16 29l6-4v3h8v3h-8v3z" /></g>,
  <g><Flash x={9} y={8} /><path d="M8 28h21" stroke="#777" strokeWidth="2" /></g>,
  <g><path d="M1 4h34v29H1z" fill="#3a3a3a" stroke="#555" /><path d="M1 4h34v4H1z" fill="#8ba4bd" /><path d="M4 11h11v19H4z" fill="#f1f1f1" /><path d="M6 14h7M6 18h7M6 22h7" stroke="#333" strokeWidth="1.500" /><path d="M15 22l6 9L32 12" stroke="#c9542a" strokeWidth="4" /></g>,
  <g><path d="M2 34L14 22" stroke="#f2e01c" strokeWidth="3" /><path d="M20 12L28 1" stroke="#c42be0" strokeWidth="3" /><Chip x={13} y={9} /><path d="M26 17h9" stroke="#ee8c2c" strokeWidth="3" /></g>,
  <g><path d="M9 12L28 26" stroke="#9a4ae0" strokeWidth="2" /><Chip x={3} y={2} /><Chip x={21} y={19} /></g>,
  <g><Plug x={3} y={2} /><Plug x={3} y={23} /><path d="M7 12h18l-9 14z" fill="#e08c8c" opacity=".85" /><Chip x={21} y={10} /><path d="M16 29l6-4v3h8v3h-8v3z" fill="#c02020" /></g>,
  <g><path d="M4 2h15l7 7v22H4z" fill="#f1f1f1" stroke="#777" strokeWidth="1.500" /><Plug x={8} y={11} /><path d="M16 25q2 8 10 6v4l8-7-8-6v4q-5 1-6-3z" fill="#9cbce8" stroke="#4a6aa4" /></g>,
  <g><path d="M4 2v32M32 2v32" stroke="#6b5b20" strokeWidth="1.500" /><path d="M4 18h6l3-8 5 18 4-16 3 6h7" stroke="#e03a2c" strokeWidth="1.800" /><path d="M1 3h7L4 8zM28 3h7l-3 5zM1 33h7l-4-6zM28 33h7l-3-6z" fill="#e9c22c" /></g>,
];

/* ---------- layer palette ---------- */
const layers = [
  ["edgeLyr", "#b0b0b0", "none"], ["0M", "#e02be8", "brick", "#59e83a"], ["RGM", "#d8261c", "x"], ["HT", "#1414d8", "x"],
  ["NEGR", "#e2e240", "dots"], ["AA", "#d8261c", "back"], ["DUMAA", "#1a1018", "maze", "#e6a8e0"], ["NPAA", "#e07a24", "back2"],
  ["PPAA", "#ecec3c", "slash2"], ["NW", "#8a1be0", "notch"], ["GT", "#1414e0", "slash"], ["DUMGT", "#8c1410", "x", "#ddd"],
  ["DG", "#e79a98", "maze"], ["HRP", "#f0a5a0", "thick"], ["SN", "#58b4f4", "thickback"], ["SP", "#fafa4c", "thickdot"],
  ["SAB", "#d8321f", "thick"], ["VSIA", "#e02be8", "dots", "#e8e840"], ["CT", "#5ae83c", "dots"], ["M1", "#4fdede", "dots"],
  ["M2", "#1f7a62", "slash2"], ["M3", "#e07a24", "back2"],
];
const swatchPaths = {
  none: "",
  x: "M3 3L19 17M19 3L3 17",
  back: "M2 3L19 18M7 2L20 13M13 2L20 8M2 9L12 18",
  back2: "M2 5L10 8L19 17M9 2L20 10",
  slash: "M3 18L19 4M10 18L20 9M2 12L13 2",
  slash2: "M4 17L13 3M11 17L19 5",
  dots: "M5 5h2M10 8h2M15 5h2M5 11h2M10 14h2M15 11h2M7 8h1M13 11h1M16 15h2M5 16h2",
  brick: "M2 7h18M2 13h18M11 2v5M6 7v6M16 7v6M11 13v5",
  maze: "M2 6h5v5h4V6h6v6M5 17v-3h5v4M14 17v-3h5",
  notch: "M3 3h5M14 3h5M3 17h5M14 17h5M3 3v4M19 3v4M3 17v-4M19 17v-4",
  thick: "", thickback: "M4 5L18 15", thickdot: "M9 9h4",
};
const Swatch = ({ c, kind, c2 }) => {
  const w = kind.startsWith("thick") ? 4 : 2;
  return (
    <svg width="22" height="20" viewBox="0 0 22 20" fill="none">
      <rect width="22" height="20" fill="#000" />
      <rect x={w / 2 + 1} y={w / 2 + 1} width={20 - w} height={18 - w} stroke={c} strokeWidth={w} />
      <path d={swatchPaths[kind]} stroke={c2 || c} strokeWidth={kind === "notch" || kind === "thickdot" ? 4 : 1.5} />
    </svg>
  );
};

const Restore = () => (
  <svg width="14" height="14" viewBox="0 0 14 14" fill="none" stroke="#111" strokeWidth="1.6">
    <path d="M5 5V1h8v7H9M5 2.500h8" /><path d="M1 6h8v7H1zM1 7.500h8" />
  </svg>
);
const CloseX = () => (
  <svg width="13" height="13" viewBox="0 0 13 13" stroke="#111" strokeWidth="2"><path d="M1 1L12 12M12 1L1 12" /></svg>
);
const ScrollArrow = ({ down }) => (
  <svg width="13" height="9" viewBox="0 0 13 9"><path d={down ? "M0 0H13L6.500 9Z" : "M0 9H13L6.500 0Z"} fill="#f6f6f6" stroke="#c4c4c4" /></svg>
);
const ThumbLines = () => (
  <svg width="10" height="12" viewBox="0 0 10 12" stroke="#999"><path d="M0 1h10M0 4.500h10M0 8h10M0 11h10" /></svg>
);
const ScrollBar = ({ thumb }) => (
  <Scroll>
    <ScrollButton><ScrollArrow /></ScrollButton>
    <Thumb $h={thumb}><ThumbLines /></Thumb>
    <ScrollButton $end><ScrollArrow down /></ScrollButton>
  </Scroll>
);

function LeftDock() {
  return (
    <Dock>
      <DockHeader><span>Palette</span><HeaderButton>?</HeaderButton><HeaderButton><Restore /></HeaderButton><HeaderButton><CloseX /></HeaderButton></DockHeader>
      <DockHeader><span>Layers</span><HeaderButton><Restore /></HeaderButton><HeaderButton><CloseX /></HeaderButton></DockHeader>
      <CheckRow>
        <Option><Check on />Valid</Option><Option><Check />Used</Option><Option><Check />Routin</Option>
      </CheckRow>
      <FilterRow>
        <Pill $w={44} $dark>Filter</Pill>
        <Combo $w={186} $h={28} $bg="#fff" pl={4}>
          <svg width="22" height="22" viewBox="0 0 24 24" fill="none" stroke="#444"><circle cx="9" cy="8" r="6" strokeWidth="2.500" /><path d="M13 13L21 21" strokeWidth="4" /></svg>
          <FilterText>Filter</FilterText>
        </Combo>
        <FilterMenu><Tri c={RED} /></FilterMenu>
      </FilterRow>
      <ComboRow>
        <Combo $w={258} $h={28} pl={1}>
          <svg width="25" height="25" viewBox="0 0 25 25"><path d="M1.500 1.500h22v22h-22z" fill="#000" stroke="#4fdede" strokeWidth="1.500" /><path d="M6 6h2M13 5h2M18 8h2M9 10h2M6 14h2M14 14h2M19 16h2M10 19h2M5 20h2M16 20h2" stroke="#4fdede" strokeWidth="2" /></svg>
          M1 drawing
        </Combo>
      </ComboRow>
      <VisRow>AV <Tri c={RED} /> NV <Tri c={RED} /> AS <Tri c={RED} /> NS <Tri c={RED} /></VisRow>
      <LibRow>
        <Pill $w={30} $dark>
          <svg width="20" height="23" viewBox="0 0 20 23" fill="none"><path d="M5 11V6q0-4 5-4t5 4v5" stroke="#8b8b8b" strokeWidth="2.600" /><path d="M2 10h16v11H2z" fill="#f2cf8c" stroke="#a5802f" /></svg>
        </Pill>
        <Pill $w={229}>smic18mmrf</Pill>
      </LibRow>
      <NameTable>
        <HeadRow $h={34} $cols="159px 48px 49px 1fr"><HeadCell $b>Name</HeadCell><HeadCell>Vis</HeadCell><HeadCell>Sel</HeadCell></HeadRow>
        <NameRow><AllLayers>All Layers</AllLayers><Mini>+</Mini><Mini>-</Mini><Mini>+</Mini><Mini>-</Mini></NameRow>
      </NameTable>
      <SplitH $h={10} />
      <ListBox $h={597}>
        <div>
          <HeadRow $h={31} $cols="24px 98px 44px 33px 1fr">
            <HeadCell><ScrollArrow /></HeadCell><HeadCell>Layer</HeadCell><HeadCell>P...</HeadCell><HeadCell>V</HeadCell><HeadCell>S</HeadCell>
          </HeadRow>
          {layers.map(([name, c, kind, c2]) => (
            <LayerRow key={name} $on={name === "M1"}>
              <Swatch c={c} kind={kind} c2={c2} /><LayerText>{name}</LayerText><LayerText>draw</LayerText><span /><Check on /><Check on />
            </LayerRow>
          ))}
        </div>
        <ScrollBar thumb={54} />
      </ListBox>
      <SplitH $h={11} />
      <DockHeader><span>Objects</span><HeaderButton><Restore /></HeaderButton><HeaderButton><CloseX /></HeaderButton></DockHeader>
      <ListBox $h={97}>
        <div>
          <HeadRow $h={32} $cols="166px 33px 1fr"><HeadCell $b>Objects</HeadCell><HeadCell>V</HeadCell><HeadCell>S</HeadCell></HeadRow>
          {["Instances", "Pins", "Vias"].map((t) => (
            <TreeRow key={t}><TreeLine /><span>{t}</span><Check on /><Check on /></TreeRow>
          ))}
        </div>
        <ScrollBar thumb={29} />
      </ListBox>
      <Tabs><Tab $w={98} $on>Objects</Tab><Tab $w={75}>Grids</Tab></Tabs>
    </Dock>
  );
}

/* ---------- layout drawing ---------- */
const G = 145.4;
const gridDots = [];
for (let i = -7; i <= 10; i++) {
  for (let j = -7; j <= 0; j++) {
    const major = i % 5 === 0 && j % 5 === 0;
    gridDots.push([1334 + i * G, 1403 + j * G, major]);
  }
}
const Dashed = ({ x, y, w, h, c, d = "21 4" }) => (
  <path d={`M${x} ${y}H${x + w}M${x} ${y + h}H${x + w}M${x} ${y}V${y + h}M${x + w} ${y}V${y + h}`} stroke={c} strokeWidth="3" strokeDasharray={d} fill="none" />
);
const Region = ({ x, y, w, h, fill, stroke, sw = 1.3 }) => <rect x={x} y={y} width={w} height={h} fill={fill ? `url(#${fill})` : "none"} stroke={stroke} strokeWidth={sw} />;
const Tag = ({ x, y, len, size, v, bg = [0, 0], children }) => (
  <g transform={`translate(${x} ${y})${v ? " rotate(-90)" : ""}`}>
    {bg[0] > 0 && <rect x={-bg[0] / 2} y={-bg[1] / 2} width={bg[0]} height={bg[1]} fill="#000" />}
    <text x={-len / 2} y={size * 0.36} textLength={len} lengthAdjust="spacing" fontSize={size} fontFamily="Inter, sans-serif" fontWeight="200" fill="#dcdcdc">{children}</text>
  </g>
);
const CYAN = "#55e2e2", BLUE = "#0b0be0", AA = "#d62c1e", SKY = "#55aef2", YEL = "#fbfb45", LIME = "#5be02f";

function LayoutCanvas() {
  return (
    <svg width="2608" height="1103" viewBox="272 378 2608 1103">
      <defs>
        <pattern id="aa" width="5" height="5" patternUnits="userSpaceOnUse"><path d="M-1 -1L6 6M-1 4L1 6M4 -1L6 1" stroke={AA} strokeWidth="1.500" /></pattern>
        <pattern id="gt" width="5" height="5" patternUnits="userSpaceOnUse"><path d="M-1 6L6 -1M-1 1L1 -1M4 6L6 4" stroke={BLUE} strokeWidth="1.250" /></pattern>
        <pattern id="sn1" x="1443" y="447" width="24" height="24" patternUnits="userSpaceOnUse"><path d="M-1 -1L25 25M-2 22L2 26M22 -2L26 2" stroke={SKY} strokeWidth="1.700" /></pattern>
        <pattern id="sn2" x="1443" y="1071" width="24" height="24" patternUnits="userSpaceOnUse"><path d="M-1 -1L25 25M-2 22L2 26M22 -2L26 2" stroke={SKY} strokeWidth="1.700" /></pattern>
        <pattern id="sp1" x="1451.500" y="550" width="24" height="24" patternUnits="userSpaceOnUse"><rect width="5" height="5" fill={YEL} /></pattern>
        <pattern id="sp2" x="1451.500" y="1318" width="24" height="24" patternUnits="userSpaceOnUse"><rect width="5" height="5" fill={YEL} /></pattern>
        <pattern id="m1" width="10" height="10" patternUnits="userSpaceOnUse"><path d="M1 1h1.500M6 3h1.500M3 6h1.500M8 8h1.500" stroke={CYAN} strokeWidth="1.300" /></pattern>
        <pattern id="ct" width="4" height="4" patternUnits="userSpaceOnUse"><rect width="4" height="4" fill="#0c2a06" /><path d="M0 0h2v2H0zM2 2h2v2H2z" fill="#4cc42a" /></pattern>
      </defs>
      <rect x="272" y="378" width="2608" height="1103" fill="#000" />
      {gridDots.map(([x, y, m], k) => <rect key={k} x={x - 1} y={y - 1} width={m ? 3 : 2} height={m ? 3 : 2} fill={m ? "#e6e6e6" : "#2f9a1c"} />)}
      <path d="M272 1403.500H2880M1334 378V1481" stroke="#dcdcdc" strokeWidth="1.500" />

      <Dashed x={1407} y={442.5} w={337.5} h={363} c="#8a1be0" d="10 3.500" />

      <Region x={1470.5} y={459.7} w={212} h={61.5} fill="aa" stroke={AA} />
      <Region x={1470.5} y={597.5} w={212} h={145.5} fill="aa" stroke={AA} />
      <Region x={1470.5} y={1117} w={212} h={145} fill="aa" stroke={AA} />
      <Region x={1470.5} y={1339} w={212} h={61} fill="aa" stroke={AA} />
      <rect x="1519" y="609" width="114" height="32" fill="#000" />

      <Region x={1539.5} y={566} w={74} h={727} fill="gt" stroke={BLUE} sw={1.8} />
      <path d="M1540 584H1613M1540 597.500H1613M1540 742H1613M1540 758.500H1613M1540 776.500H1613M1540 1084H1613M1540 1102H1613M1540 1117H1613M1540 1262H1613M1540 1275.500H1613M1577.500 776V1084" stroke={BLUE} strokeWidth="1.800" fill="none" />

      <Region x={1476.7} y={473} w={200} h={35} fill="m1" stroke={CYAN} />
      <Region x={1476.7} y={1352} w={200} h={34.5} fill="m1" stroke={CYAN} />
      <Region x={1484.3} y={508} w={33.2} h={95.5} fill="m1" stroke={CYAN} />
      <Region x={1484.3} y={603.5} w={33.2} h={134} fill="m1" stroke={CYAN} />
      <Region x={1635.5} y={603.5} w={33.3} h={134} fill="m1" stroke={CYAN} />
      <Region x={1635.5} y={737.5} w={33.3} h={385} fill="m1" stroke={CYAN} />
      <Region x={1484.3} y={1122.5} w={33.2} h={133.500} fill="m1" stroke={CYAN} />
      <Region x={1635.5} y={1122.5} w={33.3} h={133.500} fill="m1" stroke={CYAN} />
      <Region x={1484.3} y={1256} w={33.2} h={96} fill="m1" stroke={CYAN} />
      {[[1494.3, 473.7, 33, 33.5], [1626.3, 473.7, 33, 33.5], [1494.3, 1352.6, 33, 33.5], [1626.3, 1352.6, 33, 33.5], [1484.8, 612, 32.3, 118], [1636, 612, 32.3, 118], [1484.8, 1130, 32.3, 117.5], [1636, 1130, 32.3, 117.5]].map(([x, y, w, h], k) => (
        <Region key={k} x={x} y={y} w={w} h={h} fill="ct" stroke={LIME} sw={1.4} />
      ))}

      <rect x="1443" y="545.500" width="265.500" height="248" fill="url(#sp1)" />
      <rect x="1443" y="1312" width="265.500" height="113" fill="url(#sp2)" />
      <rect x="1443" y="433.500" width="265.500" height="111" fill="url(#sn1)" />
      <rect x="1443" y="1065" width="265.500" height="247" fill="url(#sn2)" />
      <Dashed x={1443} y={433.5} w={265.5} h={111} c={SKY} />
      <Dashed x={1443} y={1065} w={265.5} h={247} c={SKY} />
      <Dashed x={1443} y={545.5} w={265.5} h={248} c={YEL} />
      <Dashed x={1443} y={1312.5} w={265.5} h={113} c={YEL} />

      <rect x="1549" y="959" width="60" height="61.500" stroke={BLUE} strokeWidth="1.600" fill="none" />
      <Region x={1552.7} y={965} w={50.500} h={50.500} fill="m1" stroke={CYAN} sw={1.6} />
      <rect x="1560" y="973" width="37" height="34" fill="#000" />
      <path d="M1561.500 974H1596M1561.500 1006H1596" stroke={LIME} strokeWidth="1.600" />

      <Tag x={1576} y={489.5} len={80} size={25} bg={[86, 27]}>/B/vdd</Tag>
      <Tag x={1576} y={1369} len={78} size={23} bg={[86, 27]}>/B/vss</Tag>
      <Tag x={1574.5} y={625} len={108} size={31}>/B/vdd</Tag>
      <Tag x={1501} y={557} len={52} size={28} v bg={[60, 28]}>vdd</Tag>
      <Tag x={1501} y={669.5} len={84} size={25} v bg={[86, 28]}>/S/vdd</Tag>
      <Tag x={1652} y={671.5} len={80} size={25} v bg={[86, 28]}>/D/out</Tag>
      <Tag x={1652.5} y={929.5} len={48} size={26} v bg={[56, 30]}>out</Tag>
      <Tag x={1579} y={929} len={28} size={26} v bg={[36, 30]}>in</Tag>
      <Tag x={1578.5} y={991.500} len={29} size={30}>in</Tag>
      <Tag x={1501} y={1190.5} len={80} size={24} v bg={[84, 28]}>/S/vss</Tag>
      <Tag x={1652} y={1190} len={80} size={25} v bg={[84, 28]}>/D/out</Tag>
      <Tag x={1501} y={1304} len={52} size={25} v bg={[58, 24]}>vss</Tag>
      <path d="M1500.500 508V525M1500.500 586V603M1652.500 737V901M1652.500 958V1122M1500.500 1256V1273M1500.500 1335V1352" stroke={CYAN} strokeWidth="1.600" />
    </svg>
  );
}

/* ---------- dialog ---------- */
function CreateLabel() {
  return (
    <Dialog>
      <DialogTitle>
        <DialogMark />
        Create Label
        <DialogButtons>
          <svg width="16" height="18" viewBox="0 0 16 18"><path d="M8 1L15 9H10.500V16H5.500V9H1Z" fill="#fff" stroke="#777" /></svg>
          <svg width="16" height="16" viewBox="0 0 16 16"><path d="M1 1h14v14H1zM5 5h6v6H5z" fill="#f4f4f4" fillRule="evenodd" stroke="#777" /></svg>
          <svg width="17" height="17" viewBox="0 0 17 17"><path d="M2 2L15 15M15 2L2 15" stroke="#777" strokeWidth="5" /><path d="M2 2L15 15M15 2L2 15" stroke="#fff" strokeWidth="3" /></svg>
        </DialogButtons>
      </DialogTitle>
      <FormRow $h={50} $pl={10} $pt={1}>
        <Label $w={74} $shift={1}>Mode</Label>
        <Option $w={115}><RadioShape $on />Manual</Option>
        <Option><RadioShape />Auto</Option>
      </FormRow>
      <FormRow $h={76} $pl={10}>
        <Label $w={147} $shift={1}>Label (Pattern)</Label>
        <Input $w={587}>vdd vss in out</Input>
      </FormRow>
      <Group $h={195}>
        <Legend>Label Layer/Purpose</Legend>
        <FormRow $h={40.7} $pt={2}><Option><RadioShape $on />Use current entry layer</Option></FormRow>
        <FormRow $h={40.7} $pt={2}>
          <Option $w={394}><RadioShape />Use same layer as shape, select purpose</Option>
          <Combo $w={178} $shift={-2} off>drawing</Combo>
        </FormRow>
        <FormRow $h={40.7} $pt={2}><Option><RadioShape />Auto (Using stampLabelLayers section from technology file)</Option></FormRow>
        <FormRow $h={40.7} $pt={2}>
          <Option $w={146}><RadioShape />Select layer</Option>
          <Combo $w={225} $h={43} $shift={-14.5} $bg="#e0e0e0" pl={5} off>
            <svg width="21" height="22" viewBox="0 0 21 22"><path d="M1 1h19v20H1z" fill="#8b8b8b" stroke="#bbb" strokeWidth="2" /></svg>
            geLayer drawing
          </Combo>
        </FormRow>
      </Group>
      <Group $h={172} $mt={15}>
        <Legend>Label Options</Legend>
        <FormRow $h={50} $pl={4}>
          <Label $w={75} $shift={4}>Font</Label>
          <Combo $w={142} $shift={-3}>roman</Combo>
          <Label $w={64} $ml={29} $shift={1}>Height</Label>
          <Input $w={78} $ml={1} $strong>0.2</Input>
          <Label $w={97} $ml={61} $shift={3}>Justification</Label>
          <Combo $w={180} $shift={-3}>centerCenter</Combo>
        </FormRow>
        <FormRow $h={30} $pl={4} $pt={1}><Option $w={345}><Check on />Drafting</Option><Option><Check on />Attach</Option></FormRow>
        <FormRow $h={30} $pl={4} $pt={1}><Option $w={345}><Check />Overbar</Option><Option><Check on />Expand</Option></FormRow>
        <FormRow $h={30} $pl={4} $pt={1}><Option><Check on />Keep Label</Option></FormRow>
      </Group>
      <Group $h={66} $mt={23}>
        <Legend>Scan Line</Legend>
        <FormRow $h={38} $pl={4} $pt={3}><Option $w={345}><Check />Label Selected Objects</Option><Option><Check on />Auto Zoom Out</Option></FormRow>
      </Group>
      <Group $h={81} $mt={24}>
        <Legend>Auto Step</Legend>
        <FormRow $h={44} $pl={4}>
          <Option $w={74} $shift={-1.5}><Check />Step</Option>
          <Combo $w={145} off>Custom</Combo>
          <Label $w={42} $ml={28} $shift={3} $off>X</Label>
          <Input $w={101} $shift={2.5} $off>0</Input>
          <Label $w={42} $ml={44} $shift={3} $off>Y</Label>
          <Input $w={101} $shift={2.5} $off>0</Input>
        </FormRow>
      </Group>
      <SnapRow $h={68} $pl={8}>
        <Label $w={135} $shift={15}>Snap Mode</Label>
        <Combo $w={154} $shift={9}>orthogonal</Combo>
      </SnapRow>
      <ToolRow>
        <ToolButton><ToolFace $pl={26} $gap={17}>
          <svg width="38" height="23" viewBox="0 0 38 23" fill="none" stroke="#000" strokeWidth="1.600"><path d="M19 1H11V11M7 7l4 4 4-4M1 22L20 10V22Z" /><path d="M26 1V22H36Z" fill="#000" /></svg>
          <ToolText>Rotate</ToolText>
        </ToolFace></ToolButton>
        <ToolButton><ToolFace $pl={25} $gap={9} $fs={19}>
          <svg width="28" height="23" viewBox="0 0 28 23" fill="none" stroke="#000" strokeWidth="1.500"><path d="M12 1V22H1Z" /><path d="M16 1V22H27Z" fill="#000" /></svg>
          <ToolText>Sideways</ToolText>
        </ToolFace></ToolButton>
        <ToolButton><ToolFace $pl={25} $gap={4}>
          <svg width="22" height="27" viewBox="0 0 22 27" fill="none" stroke="#000" strokeWidth="1.500"><path d="M1 11L21 1V11Z" fill="#000" /><path d="M1 15H21V26Z" /></svg>
          <ToolText>Upside Down</ToolText>
        </ToolFace></ToolButton>
      </ToolRow>
      <ActionRow>
        <Action $w={92} $main><span><u>H</u>ide</span></Action>
        <Action $w={116}><span><u>C</u>ancel</span></Action>
        <Action $w={97}><span><u>H</u>elp</span></Action>
      </ActionRow>
    </Dialog>
  );
}

/* ---------- page ---------- */
const menu = [
  ["", "L", "aunch", 90], ["", "F", "ile", 53], ["", "E", "dit", 56], ["", "V", "iew", 64], ["", "C", "reate", 83.5], ["Ver", "i", "fy", 76],
  ["Con", "n", "ectivity", 139], ["", "O", "ptions", 96], ["", "T", "ools", 70], ["", "W", "indow", 98], ["Ass", "u", "ra", 85], ["", "Q", "uantus", 103],
  ["Floorp", "l", "an", 112], ["", "P", "lace", 71], ["", "R", "oute", 75], ["Cali", "b", "re", 88], ["", "H", "elp", 60],
];
const LibIcon = () => <svg width="24" height="24" viewBox="0 0 24 24" fill="#faf6f6" stroke="#c39a9a" strokeWidth="1.500"><path d="M1 4q6-3 11 0q5-3 11 0v16q-6-3-11 0q-5-3-11 0zM12 4v16" /><path d="M14 21L22 9" stroke="#d8b45a" strokeWidth="3" /></svg>;
const TaskFolder = () => <svg width="24" height="24" viewBox="0 0 24 24"><path d="M1 2h8l2 3h12v17H1z" fill="#8a795c" /><path d="M4 7h19v15H4z" fill="#c4ad83" stroke="#8a6d3c" /></svg>;
const CIcon = () => <svg width="24" height="24" viewBox="0 0 24 24"><path d="M1 1h22v22H1z" fill="#fff" stroke="#333" strokeWidth="2.500" /><path d="M8 2h8v3H8z" fill="#e03a3a" /><path d="M16 9q-7-2-7 4t7 5" stroke="#111" strokeWidth="3.500" fill="none" /></svg>;
const VIcon = ({ s = 24 }) => <svg width={s} height={s} viewBox="0 0 24 24"><path d="M0 0h24v24H0z" fill="#4a4a4a" /><path d="M1 16L9 4l3 5 3-2v6l4 3-5 6-5-4-3 4z" fill="#d9d9d9" /><path d="M6 13l5-5M9 17l5-6" stroke="#555" strokeWidth="1.500" /><path d="M18 2l4 1v8l-6 7-1-8z" fill="#111" stroke="#eee" strokeWidth="1.200" /></svg>;
const WinIcon = () => <svg width="24" height="24" viewBox="0 0 24 24"><path d="M1 1h22v22H1z" fill="#fafafa" stroke="#999" /><path d="M1 1h22v7H1z" fill="#243f78" /></svg>;
const TermIcon = () => <svg width="24" height="26" viewBox="0 0 24 26"><path d="M1 1h22v24H1z" fill="#bbb" stroke="#555" strokeWidth="2" /><path d="M4 4h16v17H4z" fill="#1e2625" /><path d="M6 8l4 3-4 3M11 15h5" stroke="#8fb3a8" strokeWidth="1.500" fill="none" /></svg>;
const FolderBig = ({ home }) => (
  <svg width="52" height="48" viewBox="0 0 52 48"><path d="M2 2q0-1 2-1h18l5 5h23v12H2z" fill="#7d7059" stroke="#9a7f50" /><path d="M1 15h16l5-5h29v34q0 2-2 2H3q-2 0-2-2z" fill="#b9ab90" stroke="#a08a62" />{home && <path d="M21 26h4q3 1 3 4.500t-3 4.500h-4zM15 23v-2h3M36 21h2v2M15 34v2h3M36 36h2v-2" stroke="#7c6d54" strokeWidth="2" fill="none" />}</svg>
);

export default function App() {
  return (
    <>
      <Global />
      <Screen>
        <BrowserBar>
          <BrowserSide>
            <svg width="42" height="32" viewBox="0 0 42 32" fill="none" stroke="#c3c4c5" strokeWidth="2.600"><rect x="2" y="2" width="37" height="28" rx="5" /><path d="M15 2V30" /><path d="M5.500 8h6M5.500 13h6M5.500 18h6" strokeWidth="2" /></svg>
            <BrowserSpacer $w={25} />
            <svg width="18" height="12" viewBox="0 0 18 12" fill="none" stroke="#e6e6e6" strokeWidth="3.200" strokeLinecap="round"><path d="M3 3L9 9L15 3" /></svg>
            <BrowserSpacer $w={49} />
            <svg width="20" height="32" viewBox="0 0 20 32" fill="none" stroke="#c3c4c5" strokeWidth="2.800" strokeLinecap="round"><path d="M16 3L3 16L16 29" /></svg>
            <BrowserSpacer $w={50} />
            <svg width="38" height="38" viewBox="0 0 38 38" fill="none"><circle cx="19" cy="19" r="15.800" stroke="#bcbdbe" strokeWidth="2.800" /><circle cx="19" cy="19" r="10.500" fill="#bcbdbe" /><path d="M16 13.500V24.500L24.500 19Z" fill="#38393b" /></svg>
            <BrowserSpacer $w={36} />
            <svg width="38" height="38" viewBox="0 0 38 38" fill="none"><circle cx="19" cy="19" r="15.800" stroke="#6cc1fb" strokeWidth="2.800" /><circle cx="19" cy="19" r="10.500" fill="#6cc1fb" /><path d="M11 27L27 11" stroke="#38393b" strokeWidth="3.600" /></svg>
          </BrowserSide>
          <AddressBar>
            <span />
            <AddressHost>
              <svg width="36" height="36" viewBox="0 0 36 36" fill="none"><rect width="36" height="36" rx="5" fill="#e9eaec" /><path d="M9 28Q2 27 3 20Q4 15 9 15Q10 7 18 8Q24 9 25 15Q32 15 32 21Q32 27 27 28Z" stroke="#3c72f0" strokeWidth="2.600" /><path d="M12 28V19.500q3-3 6 0V28M18 19.500q3-3 6 0V28" stroke="#3c72f0" strokeWidth="2.600" /><path d="M27 11q3 0 3 3M28 8q5 1 5 5" stroke="#f08a2c" strokeWidth="1.800" /></svg>
              10.52.130.253
              <svg width="20" height="28" viewBox="0 0 20 28" fill="none"><path d="M4.500 13V8q0-6 5.500-6t5.500 6v5" stroke="#e3e3e3" strokeWidth="2.600" /><rect x="1" y="12" width="18" height="15" rx="2.500" fill="#e3e3e3" /></svg>
            </AddressHost>
            <AddressMenu><svg width="34" height="34" viewBox="0 0 34 34"><circle cx="17" cy="17" r="16.500" fill="#e4e4e4" /><circle cx="9.500" cy="17" r="2.400" fill="#444" /><circle cx="17" cy="17" r="2.400" fill="#444" /><circle cx="24.500" cy="17" r="2.400" fill="#444" /></svg></AddressMenu>
          </AddressBar>
          <BrowserSide $end $gap={41}>
            <svg width="36" height="36" viewBox="0 0 36 36" fill="none" stroke="#c3c4c5" strokeWidth="2.500"><circle cx="18" cy="18" r="15.500" /><path d="M18 9V26M11.500 19.500L18 26L24.500 19.500" /></svg>
            <svg width="32" height="40" viewBox="0 0 32 40" fill="none" stroke="#c3c4c5" strokeWidth="2.500"><path d="M10 13H5Q2 13 2 16V34Q2 37 5 37H27Q30 37 30 34V16Q30 13 27 13H22M16 25V3M10 9L16 2.500L22 9" /></svg>
            <svg width="30" height="30" viewBox="0 0 30 30" stroke="#c3c4c5" strokeWidth="2.600"><path d="M15 1V29M1 15H29" /></svg>
            <svg width="38" height="38" viewBox="0 0 38 38" fill="none" stroke="#c3c4c5" strokeWidth="2.600"><path d="M27 9V6Q27 2 23 2H6Q2 2 2 6V24Q2 28 6 28H9" /><rect x="10" y="10" width="26" height="26" rx="4" /></svg>
          </BrowserSide>
        </BrowserBar>
        <BlackStrip />

        <Panel>
          <AppsButton>
            <svg width="34" height="32" viewBox="0 0 34 32"><path d="M2 3L9 1L17 13L26 0L33 2L23 16L33 28L26 32L17 20L8 32L1 29L11 16Z" fill="#8ecdee" /><path d="M5 12L11 9L14 13Q24 9 29 15Q31 22 25 24L14 23L9 25L8 18Z" fill="#0c0c0c" /></svg>
            Applications
          </AppsButton>
          <PanelGrip />
          <Task><LibIcon />[Library Manager: Dir...</Task>
          <Task><TaskFolder />lab4 - File Manager</Task>
          <Task><CIcon />Virtuoso® 6.1.8-64b ...</Task>
          <Task><VIcon />Virtuoso® Layout Sui...</Task>
          <Task $active><WinIcon />Create Label</Task>
          <Task><TermIcon />Terminal - stu92@VM...</Task>
          <Pager>
            <PagerCell $on><svg width="38" height="30" viewBox="0 0 38 30"><path d="M14 6h22v23H14z" fill="#444" /><path d="M28 7l5 2-6 16-7 3z" fill="#eee" /><path d="M2 2h21v22H2z" fill="#8fb8f2" stroke="#e4effc" strokeWidth="1.500" /></svg></PagerCell>
            <PagerCell /><PagerCell /><PagerCell />
          </Pager>
          <Clock>19:42</Clock>
          <Tray>
            EN
            <svg width="34" height="34" viewBox="0 0 34 34" fill="none"><rect x="1" y="1" width="32" height="32" rx="3" fill="#f2f7fe" stroke="#7aa9e4" strokeWidth="2" /><path d="M6 6L11 18L16 6M28 8q-7-2-7 3t6 2M28 8v5q0 5-6 5M22 24q6 3 6-3" stroke="#7aa9e4" strokeWidth="2.600" /><circle cx="9" cy="25" r="8" fill="#cc3326" /><path d="M6 22L12 28M12 22L6 28" stroke="#fff" strokeWidth="2.200" /></svg>
            <svg width="24" height="34" viewBox="0 0 24 34"><rect x="5" y="1" width="8" height="30" rx="3" fill="#e2e2e0" stroke="#b5b5b3" strokeWidth="1.500" /><path d="M11 20h12v13H11z" fill="#555" /><path d="M14 24l6 6M20 24l-6 6" stroke="#ddd" strokeWidth="2" /></svg>
          </Tray>
          stu92
        </Panel>
        <FrameEdge />

        <TitleBar>
          <VIcon s={33} />
          <span>Virtuoso® Layout Suite XL Editing: lab3 inverter layout</span>
          <WinButtons>
            <svg width="22" height="20" viewBox="0 0 22 20"><path d="M11 3L17 10H13V17H9V10H5Z" fill="#b4b4b2" /></svg>
            <svg width="22" height="20" viewBox="0 0 22 20"><path d="M6 13h10v4H6z" fill="#b4b4b2" /></svg>
            <svg width="22" height="20" viewBox="0 0 22 20" fill="none" stroke="#b4b4b2" strokeWidth="2"><path d="M8 7V3h10v9h-4M4 8h9v9H4z" /></svg>
            <svg width="22" height="20" viewBox="0 0 22 20" stroke="#b4b4b2" strokeWidth="3"><path d="M5 3L17 17M17 3L5 17" /></svg>
          </WinButtons>
        </TitleBar>
        <MenuBar>
          {menu.map(([a, u, b, w]) => <MenuItem key={u + b} $w={w}>{a}<u>{u}</u>{b}</MenuItem>)}
          <Brand>cadence</Brand>
        </MenuBar>
        <RedLine />
        <Gutter />

        <Bar>
          <BarGroup $w={152}><Grip />{["open", "openNet", "save"].map((k) => <Slot key={k}><Icon>{icons[k]}</Icon></Slot>)}</BarGroup>
          <BarGroup $w={530}>
            <Grip />
            {["undo", "redo"].map((k) => <Slot key={k}><Icon>{icons[k]}</Icon></Slot>)}
            <Separator />
            {["move", "copy", "stretch", "del", "replaceR", "info", "align"].map((k) => <Slot key={k}><Icon>{icons[k]}</Icon></Slot>)}
            <Separator />
            <Slot><Icon>{icons.rotate}</Icon></Slot>
            <More $w={64}>»</More>
          </BarGroup>
          <BarGroup $w={187}>
            <Grip />
            {["netAdd", "abc", "plug"].map((k) => <Slot key={k}><Icon>{icons[k]}</Icon></Slot>)}
            <More $w={46}>»</More>
          </BarGroup>
          <BarGroup $w={95}><Grip $mr={-4} /><Slot $w={47}><Icon>{icons.zoom}</Icon></Slot><More $w={42}>»</More></BarGroup>
          <BarGroup $w={331}>
            <Grip $mr={3} />
            <Combo $w={215} $h={38} $bg="#fff">Classic</Combo>
            <Slot><Icon>{icons.viewSave}</Icon></Slot>
            <Slot><Icon>{icons.viewHide}</Icon></Slot>
          </BarGroup>
          <BarGroup><Grip $mr={-5} /><Combo $w={162} $h={38} $bg="#fff">Off</Combo></BarGroup>
        </Bar>
        <Bar>
          <BarGroup $w={562} $pt={3}>
            <Grip />
            <Slot><Icon>{icons.selShape}</Icon></Slot>
            <Slot><Pressed><Icon>{icons.wire}</Icon></Pressed></Slot>
            <Slot><Pressed><Icon>{icons.layers}</Icon></Pressed></Slot>
            <Slot><Icon>{icons.cross}</Icon></Slot>
            <Slot><Icon>{icons.selGroup}</Icon></Slot>
            <Separator />
            {["stop", "warn", "ruler"].map((k) => <Slot key={k}><Icon>{icons[k]}</Icon></Slot>)}
            <Slot><Pressed><Icon>{icons.edit}</Icon></Pressed></Slot>
            <Slot><Pressed><Icon>{icons.warnFlash}</Icon></Pressed></Slot>
            <More $w={142}>»</More>
          </BarGroup>
          <BarGroup $pt={3}>
            <Grip $mr={7} />
            <Label $w={728}>(F</Label>
            <Input $w={100} $h={38} />
            <Label $w={28} $ml={2}>dY</Label>
            <Input $w={131} $h={38}>0.720</Input>
            <Label $w={112} $ml={8}>Dist:2.944</Label>
            <Label $w={120}>Cmd:Label</Label>
          </BarGroup>
        </Bar>

        <Workspace>
          <LeftDock />
          <DockSplit />
          <CanvasFrame><LayoutCanvas /></CanvasFrame>
        </Workspace>

        <Bar><BarGroup><Grip />{rowA.map((g, i) => <Slot key={i}><Icon>{g}</Icon></Slot>)}</BarGroup></Bar>
        <Bar><BarGroup><Grip />{rowB.map((g, i) => <Slot key={i}><Icon s={33}>{g}</Icon></Slot>)}</BarGroup></Bar>
        <Bar><BarGroup><Grip /></BarGroup></Bar>
        <MouseBar><Grip /><span>mouse L: Enter Point</span><span>M: Rotate 90</span><span>R: Pop-up Menu</span></MouseBar>
        <StatusBar>
          <StatusCount>2(3)</StatusCount>
          Click a figure or select figures or draw through using the MMB to place the labels:
          <StatusCmd>Cmd: Label<StatusGrip /></StatusCmd>
        </StatusBar>
        <Desktop>
          <Launcher>
            <LaunchCell><FolderBig home /></LaunchCell>
            <LaunchRule />
            <LaunchCell><svg width="50" height="44" viewBox="0 0 50 44"><path d="M2 2h46v36l2 5H0l2-5z" fill="#a9aaa8" stroke="#6c6d6b" /><path d="M5 5h40v32H5z" fill="#1b2222" /><path d="M26 5h8L24 30l-2-2z" fill="#4b5552" /><path d="M7 10l4 3-4 3M12 18h5" stroke="#e4e4e4" strokeWidth="1.800" fill="none" /></svg></LaunchCell>
            <LaunchCell><svg width="40" height="50" viewBox="0 0 40 50"><path d="M6 1h28l4 8v40H2V9z" fill="#e4e4e1" stroke="#a5a6a2" strokeWidth="1.500" /><path d="M5 10h30v16H5zM5 29h30v16H5z" fill="#f2f2f0" stroke="#a5a6a2" strokeWidth="1.500" /><path d="M13 20v-4h14v4M13 39v-4h14v4" stroke="#8c8d89" strokeWidth="2" fill="#ccc" /></svg></LaunchCell>
            <LaunchCell><svg width="52" height="52" viewBox="0 0 52 52"><circle cx="26" cy="26" r="24" fill="#6f97cb" stroke="#3d64a0" strokeWidth="2" /><path d="M7 16Q14 4 27 4L25 11L19 16L21 22L14 28L5 24ZM31 5Q41 8 45 15L39 17L32 14ZM30 20L40 18L47 24L45 32L40 42L35 32L29 28ZM9 32L18 34L20 44L14 42Z" fill="#eef1f4" /><path d="M22 18V46L16 40L12 50L7 47L11 38L3 36Z" fill="#f4f4f4" stroke="#777" strokeWidth="1.300" /></svg></LaunchCell>
            <LaunchCell><svg width="52" height="52" viewBox="0 0 52 52" fill="none"><path d="M34 35L48 47" stroke="#4a4038" strokeWidth="7" strokeLinecap="round" /><circle cx="21" cy="21" r="18" fill="#eeeeec" stroke="#4548a6" strokeWidth="4.500" /><circle cx="21" cy="21" r="15" stroke="#8f9ad8" strokeWidth="2" /></svg></LaunchCell>
            <LaunchRule />
            <LaunchCell><FolderBig /></LaunchCell>
          </Launcher>
        </Desktop>

        <CreateLabel />
        <PullTab><svg width="30" height="18" viewBox="0 0 30 18" fill="none" stroke="#fff" strokeWidth="3"><path d="M2 16L15 3L28 16" /></svg></PullTab>
        <RemoteBar>
          <RemoteItem $gap={29}>
            <svg width="40" height="40" viewBox="0 0 40 40" fill="none" stroke="#fff" strokeWidth="3"><path d="M1.500 12V1.500H12M28 1.500H38.500V12M38.500 28V38.500H28M12 38.500H1.500V28M2 2L14 14M38 2L26 14M38 38L26 26M2 38L14 26" /></svg>
            <RemoteText>全屏</RemoteText>
          </RemoteItem>
          <RemoteItem $gap={33}>
            <svg width="40" height="40" viewBox="0 0 40 40" fill="none" stroke="#fff" strokeWidth="3"><rect x="1.500" y="1.500" width="37" height="37" /><path d="M8 15V8H15M25 8H32V15M32 25V32H25M15 32H8V25" /></svg>
            <RemoteText>自适应屏幕</RemoteText>
          </RemoteItem>
          <RemoteItem $gap={29} $last>
            <svg width="42" height="42" viewBox="0 0 42 42" fill="none" stroke="#fff" strokeWidth="3" strokeLinecap="round"><path d="M19 12L26 5Q31 1 36 5Q41 10 37 16L30 23M23 30L16 37Q10 41 5 37Q1 32 5 26L12 19" /><path d="M15 15L19 19M23 23L27 27M11 3L13 10M3 12L10 14M31 28L39 30M28 32L30 39" /></svg>
            <RemoteText>重启</RemoteText>
          </RemoteItem>
        </RemoteBar>
      </Screen>
    </>
  );
}
